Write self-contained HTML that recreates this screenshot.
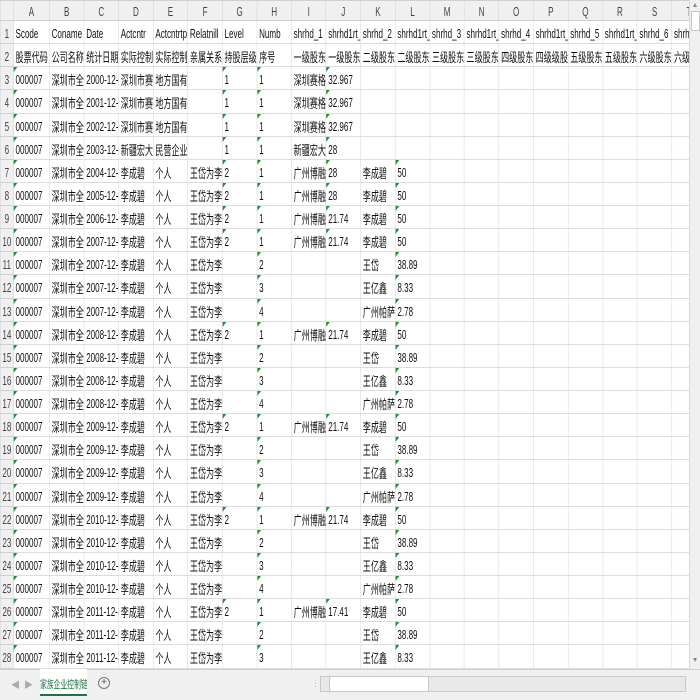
<!DOCTYPE html>
<html><head><meta charset="utf-8"><style>
*{margin:0;padding:0;box-sizing:border-box}
body{width:700px;height:700px;overflow:hidden;background:#fff;position:relative;font-family:"Liberation Sans","Noto Sans CJK SC",sans-serif}
#g{position:absolute;left:0;top:0;width:689px;height:669px;overflow:hidden}
table{border-collapse:collapse;table-layout:fixed;width:1140px;transform:scaleX(.62);transform-origin:0 0}
td,th{border:1px solid #dcdcdc;height:23.14px;white-space:nowrap;overflow:hidden;font-size:13px;font-weight:normal;text-align:left;padding:3px 0 0 3px;color:#111;position:relative}
thead th{height:20px;background:#f0f0f0;color:#444;text-align:center;font-size:13px;padding:1px 0 0;border-color:#cfcfcf}
tbody th{background:#f0f0f0;color:#444;text-align:center;padding:3px 0 0;font-size:13px;border-color:#cfcfcf}
td.m::before{content:"";position:absolute;left:0;top:0;border-top:5px solid #1f8f36;border-right:6px solid transparent}
#vs{position:absolute;left:689px;top:0;width:11px;height:669px;background:#f0f0f0;border-left:1px solid #d8d8d8}
#vs .t{position:absolute;left:1px;top:11px;width:9px;height:20px;background:#fff;border:1px solid #c8c8c8}
#vs .u{position:absolute;left:3px;top:3px;border-bottom:4px solid #888;border-left:2.5px solid transparent;border-right:2.5px solid transparent}
#vs .d{position:absolute;left:3px;top:658px;border-top:4px solid #888;border-left:2.5px solid transparent;border-right:2.5px solid transparent}
#bb{position:absolute;left:0;top:669px;width:700px;height:31px;background:#f0f0f0;border-top:1px solid #d0d0d0}
#tab{position:absolute;left:40px;top:-1px;width:47px;height:27px;background:#fff;border-bottom:2px solid #217346;color:#217346;font-size:11px;padding-top:7px;white-space:nowrap;overflow:hidden}
#tab span{display:block;width:76px;text-align:center;transform:scaleX(.62);transform-origin:0 0;margin-left:0}
#plus{position:absolute;left:98px;top:7px;width:12px;height:12px;border:1px solid #777;border-radius:50%;color:#555;font-size:10px;line-height:10px;text-align:center}
#hs{position:absolute;left:320px;top:6px;width:366px;height:16px;border:1px solid #c8c8c8;background:#e8e8e8}
#hs .t{position:absolute;left:8px;top:0;width:100px;height:14px;background:#fff;border-left:1px solid #c8c8c8;border-right:1px solid #c8c8c8}
.ar{position:absolute;color:#aaa;font-size:9px}
</style></head><body>
<div id="g"><table>
<colgroup><col style="width:21px"><col style="width:58px"><col span="19" style="width:55.6px"></colgroup>
<thead><tr><th style="background:#f0f0f0"></th><th>A</th><th>B</th><th>C</th><th>D</th><th>E</th><th>F</th><th>G</th><th>H</th><th>I</th><th>J</th><th>K</th><th>L</th><th>M</th><th>N</th><th>O</th><th>P</th><th>Q</th><th>R</th><th>S</th><th>T</th></tr></thead>
<tbody>
<tr><th>1</th><td>Scode</td><td>Coname</td><td>Date</td><td>Actcntr</td><td>Actcntrtp</td><td>Relatnill</td><td>Level</td><td>Numb</td><td>shrhd_1</td><td>shrhd1rt_1</td><td>shrhd_2</td><td>shrhd1rt_2</td><td>shrhd_3</td><td>shrhd1rt_3</td><td>shrhd_4</td><td>shrhd1rt_4</td><td>shrhd_5</td><td>shrhd1rt_5</td><td>shrhd_6</td><td>shrhd1rt_6</td></tr>
<tr><th>2</th><td>股票代码</td><td>公司名称</td><td>统计日期</td><td>实际控制</td><td>实际控制</td><td>亲属关系</td><td>持股层级</td><td>序号</td><td>一级股东</td><td>一级股东</td><td>二级股东</td><td>二级股东</td><td>三级股东</td><td>三级股东</td><td>四级股东</td><td>四级级股</td><td>五级股东</td><td>五级股东</td><td>六级股东</td><td>六级</td></tr>
<tr><th>3</th><td class=m>000007</td><td>深圳市全</td><td>2000-12-3</td><td>深圳市赛</td><td>地方国有</td><td></td><td class=m>1</td><td class=m>1</td><td>深圳赛格</td><td class=m>32.967</td><td></td><td></td><td></td><td></td><td></td><td></td><td></td><td></td><td></td><td></td></tr>
<tr><th>4</th><td class=m>000007</td><td>深圳市全</td><td>2001-12-3</td><td>深圳市赛</td><td>地方国有</td><td></td><td class=m>1</td><td class=m>1</td><td>深圳赛格</td><td class=m>32.967</td><td></td><td></td><td></td><td></td><td></td><td></td><td></td><td></td><td></td><td></td></tr>
<tr><th>5</th><td class=m>000007</td><td>深圳市全</td><td>2002-12-3</td><td>深圳市赛</td><td>地方国有</td><td></td><td class=m>1</td><td class=m>1</td><td>深圳赛格</td><td class=m>32.967</td><td></td><td></td><td></td><td></td><td></td><td></td><td></td><td></td><td></td><td></td></tr>
<tr><th>6</th><td class=m>000007</td><td>深圳市全</td><td>2003-12-3</td><td>新疆宏大</td><td>民营企业</td><td></td><td class=m>1</td><td class=m>1</td><td>新疆宏大</td><td class=m>28</td><td></td><td></td><td></td><td></td><td></td><td></td><td></td><td></td><td></td><td></td></tr>
<tr><th>7</th><td class=m>000007</td><td>深圳市全</td><td>2004-12-3</td><td>李成碧</td><td>个人</td><td>王岱为李</td><td class=m>2</td><td class=m>1</td><td>广州博融</td><td class=m>28</td><td>李成碧</td><td class=m>50</td><td></td><td></td><td></td><td></td><td></td><td></td><td></td><td></td></tr>
<tr><th>8</th><td class=m>000007</td><td>深圳市全</td><td>2005-12-3</td><td>李成碧</td><td>个人</td><td>王岱为李</td><td class=m>2</td><td class=m>1</td><td>广州博融</td><td class=m>28</td><td>李成碧</td><td class=m>50</td><td></td><td></td><td></td><td></td><td></td><td></td><td></td><td></td></tr>
<tr><th>9</th><td class=m>000007</td><td>深圳市全</td><td>2006-12-3</td><td>李成碧</td><td>个人</td><td>王岱为李</td><td class=m>2</td><td class=m>1</td><td>广州博融</td><td class=m>21.74</td><td>李成碧</td><td class=m>50</td><td></td><td></td><td></td><td></td><td></td><td></td><td></td><td></td></tr>
<tr><th>10</th><td class=m>000007</td><td>深圳市全</td><td>2007-12-3</td><td>李成碧</td><td>个人</td><td>王岱为李</td><td class=m>2</td><td class=m>1</td><td>广州博融</td><td class=m>21.74</td><td>李成碧</td><td class=m>50</td><td></td><td></td><td></td><td></td><td></td><td></td><td></td><td></td></tr>
<tr><th>11</th><td class=m>000007</td><td>深圳市全</td><td>2007-12-3</td><td>李成碧</td><td>个人</td><td>王岱为李</td><td></td><td class=m>2</td><td></td><td></td><td>王岱</td><td class=m>38.89</td><td></td><td></td><td></td><td></td><td></td><td></td><td></td><td></td></tr>
<tr><th>12</th><td class=m>000007</td><td>深圳市全</td><td>2007-12-3</td><td>李成碧</td><td>个人</td><td>王岱为李</td><td></td><td class=m>3</td><td></td><td></td><td>王亿鑫</td><td class=m>8.33</td><td></td><td></td><td></td><td></td><td></td><td></td><td></td><td></td></tr>
<tr><th>13</th><td class=m>000007</td><td>深圳市全</td><td>2007-12-3</td><td>李成碧</td><td>个人</td><td>王岱为李</td><td></td><td class=m>4</td><td></td><td></td><td>广州帕萨</td><td class=m>2.78</td><td></td><td></td><td></td><td></td><td></td><td></td><td></td><td></td></tr>
<tr><th>14</th><td class=m>000007</td><td>深圳市全</td><td>2008-12-3</td><td>李成碧</td><td>个人</td><td>王岱为李</td><td class=m>2</td><td class=m>1</td><td>广州博融</td><td class=m>21.74</td><td>李成碧</td><td class=m>50</td><td></td><td></td><td></td><td></td><td></td><td></td><td></td><td></td></tr>
<tr><th>15</th><td class=m>000007</td><td>深圳市全</td><td>2008-12-3</td><td>李成碧</td><td>个人</td><td>王岱为李</td><td></td><td class=m>2</td><td></td><td></td><td>王岱</td><td class=m>38.89</td><td></td><td></td><td></td><td></td><td></td><td></td><td></td><td></td></tr>
<tr><th>16</th><td class=m>000007</td><td>深圳市全</td><td>2008-12-3</td><td>李成碧</td><td>个人</td><td>王岱为李</td><td></td><td class=m>3</td><td></td><td></td><td>王亿鑫</td><td class=m>8.33</td><td></td><td></td><td></td><td></td><td></td><td></td><td></td><td></td></tr>
<tr><th>17</th><td class=m>000007</td><td>深圳市全</td><td>2008-12-3</td><td>李成碧</td><td>个人</td><td>王岱为李</td><td></td><td class=m>4</td><td></td><td></td><td>广州帕萨</td><td class=m>2.78</td><td></td><td></td><td></td><td></td><td></td><td></td><td></td><td></td></tr>
<tr><th>18</th><td class=m>000007</td><td>深圳市全</td><td>2009-12-3</td><td>李成碧</td><td>个人</td><td>王岱为李</td><td class=m>2</td><td class=m>1</td><td>广州博融</td><td class=m>21.74</td><td>李成碧</td><td class=m>50</td><td></td><td></td><td></td><td></td><td></td><td></td><td></td><td></td></tr>
<tr><th>19</th><td class=m>000007</td><td>深圳市全</td><td>2009-12-3</td><td>李成碧</td><td>个人</td><td>王岱为李</td><td></td><td class=m>2</td><td></td><td></td><td>王岱</td><td class=m>38.89</td><td></td><td></td><td></td><td></td><td></td><td></td><td></td><td></td></tr>
<tr><th>20</th><td class=m>000007</td><td>深圳市全</td><td>2009-12-3</td><td>李成碧</td><td>个人</td><td>王岱为李</td><td></td><td class=m>3</td><td></td><td></td><td>王亿鑫</td><td class=m>8.33</td><td></td><td></td><td></td><td></td><td></td><td></td><td></td><td></td></tr>
<tr><th>21</th><td class=m>000007</td><td>深圳市全</td><td>2009-12-3</td><td>李成碧</td><td>个人</td><td>王岱为李</td><td></td><td class=m>4</td><td></td><td></td><td>广州帕萨</td><td class=m>2.78</td><td></td><td></td><td></td><td></td><td></td><td></td><td></td><td></td></tr>
<tr><th>22</th><td class=m>000007</td><td>深圳市全</td><td>2010-12-3</td><td>李成碧</td><td>个人</td><td>王岱为李</td><td class=m>2</td><td class=m>1</td><td>广州博融</td><td class=m>21.74</td><td>李成碧</td><td class=m>50</td><td></td><td></td><td></td><td></td><td></td><td></td><td></td><td></td></tr>
<tr><th>23</th><td class=m>000007</td><td>深圳市全</td><td>2010-12-3</td><td>李成碧</td><td>个人</td><td>王岱为李</td><td></td><td class=m>2</td><td></td><td></td><td>王岱</td><td class=m>38.89</td><td></td><td></td><td></td><td></td><td></td><td></td><td></td><td></td></tr>
<tr><th>24</th><td class=m>000007</td><td>深圳市全</td><td>2010-12-3</td><td>李成碧</td><td>个人</td><td>王岱为李</td><td></td><td class=m>3</td><td></td><td></td><td>王亿鑫</td><td class=m>8.33</td><td></td><td></td><td></td><td></td><td></td><td></td><td></td><td></td></tr>
<tr><th>25</th><td class=m>000007</td><td>深圳市全</td><td>2010-12-3</td><td>李成碧</td><td>个人</td><td>王岱为李</td><td></td><td class=m>4</td><td></td><td></td><td>广州帕萨</td><td class=m>2.78</td><td></td><td></td><td></td><td></td><td></td><td></td><td></td><td></td></tr>
<tr><th>26</th><td class=m>000007</td><td>深圳市全</td><td>2011-12-3</td><td>李成碧</td><td>个人</td><td>王岱为李</td><td class=m>2</td><td class=m>1</td><td>广州博融</td><td class=m>17.41</td><td>李成碧</td><td class=m>50</td><td></td><td></td><td></td><td></td><td></td><td></td><td></td><td></td></tr>
<tr><th>27</th><td class=m>000007</td><td>深圳市全</td><td>2011-12-3</td><td>李成碧</td><td>个人</td><td>王岱为李</td><td></td><td class=m>2</td><td></td><td></td><td>王岱</td><td class=m>38.89</td><td></td><td></td><td></td><td></td><td></td><td></td><td></td><td></td></tr>
<tr><th>28</th><td class=m>000007</td><td>深圳市全</td><td>2011-12-3</td><td>李成碧</td><td>个人</td><td>王岱为李</td><td></td><td class=m>3</td><td></td><td></td><td>王亿鑫</td><td class=m>8.33</td><td></td><td></td><td></td><td></td><td></td><td></td><td></td><td></td></tr>
</tbody></table></div>
<div id="vs"><div class="u"></div><div class="t"></div><div class="d"></div></div>
<div id="bb">
<div class="ar" style="left:11px;top:8px">&#9664;</div><div class="ar" style="left:24px;top:8px">&#9654;</div>
<div id="tab"><span>家族企业控制链</span></div>
<div id="plus">+</div>
<div class="ar" style="left:311px;top:8px;color:#bbb">⋮</div>
<div id="hs"><div class="t"></div></div>
</div>
</body></html>
